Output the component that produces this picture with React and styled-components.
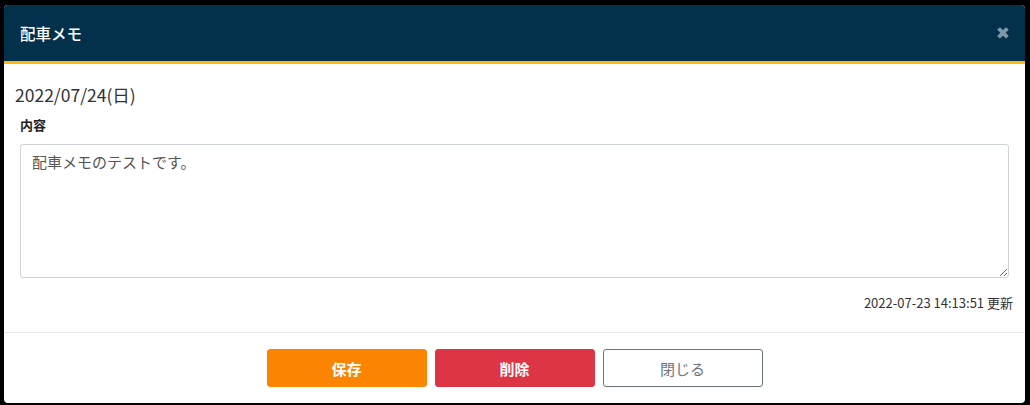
import React, { useState } from 'react';
import styled, { createGlobalStyle } from 'styled-components';

const GlobalStyle = createGlobalStyle`
  html, body {
    margin: 0;
    padding: 0;
    background: #000;
  }
  body {
    font-family: "Noto Sans CJK JP", "Noto Sans", sans-serif;
  }
  * {
    box-sizing: border-box;
  }
`;

function App() {
  const [memo, setMemo] = useState('配車メモのテストです。');

  return (
    <>
      <GlobalStyle />
      <Backdrop>
        <Modal>
          <Header>
            <Title>配車メモ</Title>
            <CloseIcon aria-label="close">✖</CloseIcon>
          </Header>
          <Body>
            <DateText>2022/07/24(日)</DateText>
            <Label>内容</Label>
            <MemoArea value={memo} onChange={e => setMemo(e.target.value)} />
            <Updated>2022-07-23 14:13:51 更新</Updated>
          </Body>
          <Footer>
            <Button $variant="save">保存</Button>
            <Button $variant="delete">削除</Button>
            <Button $variant="close">閉じる</Button>
          </Footer>
        </Modal>
      </Backdrop>
    </>
  );
}

const Backdrop = styled.div`
  width: 1030px;
  height: 405px;
  padding: 5px 5px 2px 4px;
`;

const Modal = styled.div`
  display: flex;
  flex-direction: column;
  width: 1021px;
  height: 398px;
  background: #fff;
  border-radius: 4px;
  overflow: hidden;
`;

const Header = styled.div`
  display: flex;
  align-items: center;
  justify-content: space-between;
  height: 59px;
  padding: 0 15px 0 16px;
  background: #03304a;
  border-bottom: 3px solid #fcb80b;
`;

const Title = styled.h5`
  margin: 0;
  color: #fff;
  font-size: 15.5px;
  font-weight: 500;
`;

const CloseIcon = styled.span`
  color: #7f98a7;
  font-size: 17px;
  font-weight: 700;
  line-height: 1;
  cursor: pointer;
  font-family: "DejaVu Sans", sans-serif;
`;

const Body = styled.div`
  display: flex;
  flex-direction: column;
  padding: 19px 12px 0 11px;
  height: 269px;
  border-bottom: 1px solid #e6e8eb;
`;

const DateText = styled.div`
  color: #333;
  font-size: 17.5px;
  line-height: 24px;
`;

const Label = styled.label`
  margin: 9px 0 0 5px;
  color: #222;
  font-size: 13px;
  font-weight: 700;
  line-height: 18px;
`;

const MemoArea = styled.textarea`
  margin: 10px 0 0 5px;
  width: 989px;
  height: 134px;
  padding: 6px 11px;
  border: 1px solid #ced4da;
  border-radius: 3px;
  color: #555;
  font-family: "Noto Sans CJK JP", sans-serif;
  font-size: 15px;
  line-height: 22px;
  resize: vertical;
  outline: none;
`;

const Updated = styled.div`
  margin-top: 16px;
  text-align: right;
  color: #333;
  font-size: 13px;
  line-height: 18px;
`;

const variants = {
  save: { bg: '#fb8500', border: '#fb8500', color: '#fff', weight: 700 },
  delete: { bg: '#dc3545', border: '#dc3545', color: '#fff', weight: 700 },
  close: { bg: '#fff', border: '#6c757d', color: '#6c757d', weight: 400 },
};

const Footer = styled.div`
  display: flex;
  justify-content: center;
  gap: 8px;
  padding-top: 16px;
`;

const Button = styled.button`
  width: 160px;
  height: 38px;
  border-radius: 3px;
  border: 1px solid ${p => variants[p.$variant].border};
  background: ${p => variants[p.$variant].bg};
  color: ${p => variants[p.$variant].color};
  font-family: "Noto Sans CJK JP", sans-serif;
  font-size: 15px;
  font-weight: ${p => variants[p.$variant].weight};
  cursor: pointer;
`;

export default App;
